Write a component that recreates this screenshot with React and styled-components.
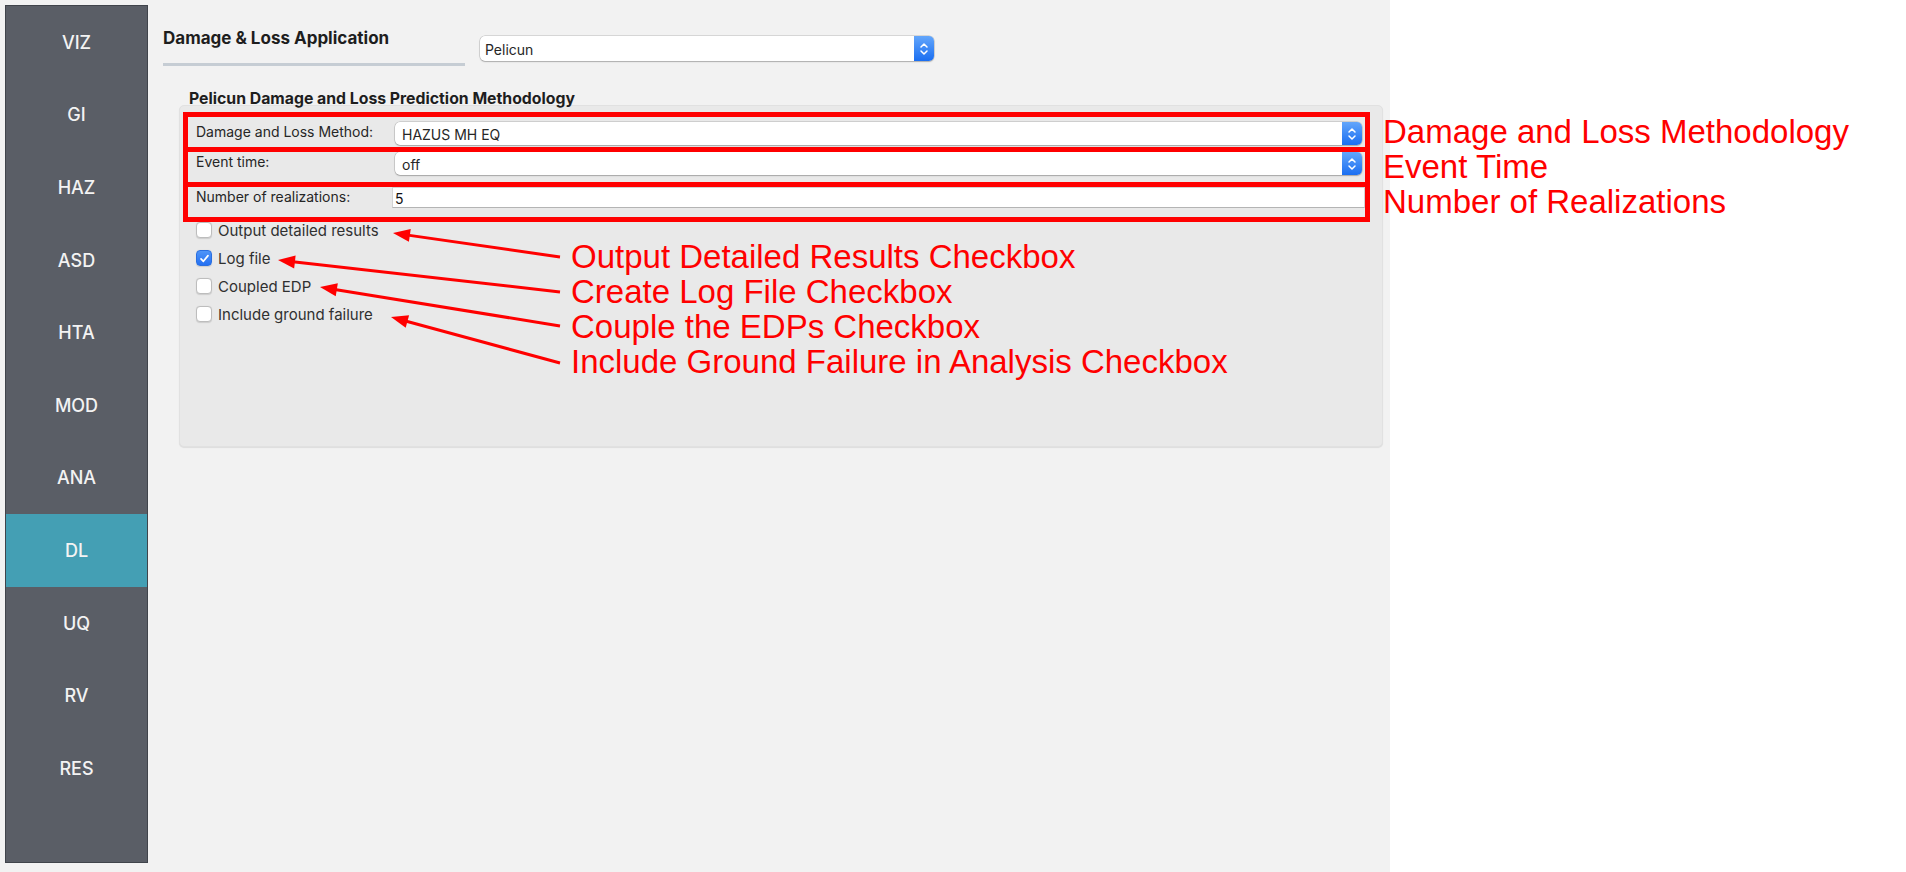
import React from 'react';
import styled, { createGlobalStyle } from 'styled-components';

const Global = createGlobalStyle`
  html, body { margin: 0; padding: 0; background: #ffffff; }
  body {
    width: 1906px; height: 872px; overflow: hidden;
    font-family: Inter, "Liberation Sans", sans-serif;
    -webkit-font-smoothing: antialiased;
  }
`;

const Canvas = styled.div`
  position: relative;
  width: 1906px;
  height: 872px;
  display: flex;
  background: #ffffff;
`;

const Window = styled.div`
  width: 1390px;
  height: 872px;
  box-sizing: border-box;
  background: #f2f2f2;
  padding: 5px 0 0 5px;
  display: flex;
  align-items: flex-start;
`;

const Sidebar = styled.nav`
  width: 143px;
  height: 858px;
  box-sizing: border-box;
  flex: none;
  background: #5a5e66;
  border: 1px solid #40444b;
  display: flex;
  flex-direction: column;
`;

const NavItem = styled.div`
  height: 72.6px;
  flex: none;
  display: flex;
  align-items: center;
  justify-content: center;
  font-size: 18px;
  font-weight: 500;
  color: #f3f3f3;
  background: ${p => (p.$active ? '#449fb4' : 'transparent')};
`;

const Main = styled.main`
  flex: 1;
  display: flex;
  flex-direction: column;
  padding-left: 15px;
`;

const HeaderRow = styled.div`
  display: flex;
  align-items: flex-start;
  margin-top: 23px;
`;

const Tab = styled.div`
  width: 302px;
  display: flex;
  flex-direction: column;
`;

const TabTitle = styled.div`
  font-size: 17px;
  font-weight: 700;
  line-height: 20px;
  color: #1e1e1e;
  white-space: nowrap;
`;

const TabRule = styled.div`
  margin-top: 15px;
  height: 3px;
  background: #c6cdd4;
`;

const Combo = styled.div`
  position: relative;
  box-sizing: border-box;
  width: ${p => p.$width || 'auto'};
  height: ${p => p.$height || 23}px;
  margin-top: ${p => p.$top || 0}px;
  margin-left: ${p => p.$left || 0}px;
  background: #ffffff;
  border-radius: 5px;
  box-shadow: 0 0 0 0.5px rgba(0, 0, 0, 0.22), 0 1px 1.5px rgba(0, 0, 0, 0.2);
  display: flex;
  align-items: center;
  padding: 2px 26px 0 ${p => p.$pad || 7}px;
  font-size: ${p => p.$fs || 14}px;
  color: #262626;
  white-space: nowrap;
`;

const Stepper = styled.div`
  position: absolute;
  right: 0;
  top: 0;
  bottom: 0;
  width: 20px;
  border-radius: 0 5px 5px 0;
  background: linear-gradient(#63a6fb, #1a6ef1);
  display: flex;
  align-items: center;
  justify-content: center;
`;

const GroupTitle = styled.div`
  position: relative;
  z-index: 1;
  margin: 27px 0 0 26px;
  font-size: 15.8px;
  line-height: 12px;
  font-weight: 700;
  color: #1e1e1e;
  white-space: nowrap;
`;

const GroupBox = styled.section`
  margin-left: 16px;
  width: 1204px;
  height: 342px;
  box-sizing: border-box;
  background: #e9e9e9;
  border: 1px solid #e1e1e1;
  border-radius: 5px;
  box-shadow: 0 1px 1px rgba(0, 0, 0, 0.09);
  padding: 16px 20px 0 16px;
  display: flex;
  flex-direction: column;
`;

const FormRow = styled.div`
  display: grid;
  grid-template-columns: 199px 1fr;
  align-items: start;
  margin-top: ${p => p.$gap || 0}px;
`;

const FieldLabel = styled.div`
  font-size: 14px;
  line-height: 20px;
  color: #262626;
  white-space: nowrap;
`;

const LineEdit = styled.div`
  box-sizing: border-box;
  height: 21px;
  margin: 0 -3px;
  background: #ffffff;
  border: 1px solid #d3d3d3;
  border-bottom-color: #b4b4b4;
  display: flex;
  align-items: center;
  padding: 1px 2px 0;
  font-size: 14px;
  color: #111;
`;

const CheckList = styled.div`
  margin-top: 8px;
  display: flex;
  flex-direction: column;
`;

const CheckRow = styled.label`
  height: 28px;
  display: flex;
  align-items: center;
  gap: 6px;
  font-size: 15px;
  color: #303030;
  white-space: nowrap;
`;

const Box = styled.span`
  box-sizing: border-box;
  width: 16px;
  height: 16px;
  border-radius: 4px;
  display: flex;
  align-items: center;
  justify-content: center;
  background: ${p => (p.$checked ? 'linear-gradient(#4f95f8, #2470f2)' : '#ffffff')};
  border: 1px solid ${p => (p.$checked ? '#2a6fe0' : '#bdbdbd')};
  box-shadow: 0 0.5px 1px rgba(0, 0, 0, 0.12);
`;

const Blank = styled.div`
  flex: 1;
  background: #ffffff;
`;

const Overlay = styled.svg`
  position: absolute;
  left: 0;
  top: 0;
  width: 1906px;
  height: 872px;
  pointer-events: none;
`;

const Note = styled.div`
  position: absolute;
  left: ${p => p.$x}px;
  top: ${p => p.$y}px;
  font-family: "Liberation Sans", Arial, sans-serif;
  font-size: 33px;
  line-height: 35px;
  color: #ff0000;
  white-space: nowrap;
  pointer-events: none;
`;

const Chevrons = () => (
  <svg width="10" height="16" viewBox="0 0 10 16" fill="none">
    <path d="M2 6 L5 3 L8 6" stroke="#fff" strokeWidth="1.5" strokeLinecap="round" strokeLinejoin="round" />
    <path d="M2 10 L5 13 L8 10" stroke="#fff" strokeWidth="1.5" strokeLinecap="round" strokeLinejoin="round" />
  </svg>
);

const Check = () => (
  <svg width="11" height="11" viewBox="0 0 11 11" fill="none">
    <path d="M2 5.8 L4.4 8.3 L9 2.6" stroke="#fff" strokeWidth="1.7" strokeLinecap="round" strokeLinejoin="round" />
  </svg>
);

const Arrow = ({ x1, y1, x2, y2 }) => {
  const dx = x2 - x1;
  const dy = y2 - y1;
  const len = Math.hypot(dx, dy);
  const ux = dx / len;
  const uy = dy / len;
  const hl = 17;
  const hw = 6.5;
  const bx = x2 - ux * hl;
  const by = y2 - uy * hl;
  const pts = `${x2},${y2} ${bx - uy * hw},${by + ux * hw} ${bx + uy * hw},${by - ux * hw}`;
  return (
    <g>
      <line x1={x1} y1={y1} x2={bx + ux * 2} y2={by + uy * 2} stroke="#ff0000" strokeWidth="3" />
      <polygon points={pts} fill="#ff0000" />
    </g>
  );
};

const NAV = ['VIZ', 'GI', 'HAZ', 'ASD', 'HTA', 'MOD', 'ANA', 'DL', 'UQ', 'RV', 'RES'];

const CHECKS = [
  { label: 'Output detailed results', checked: false },
  { label: 'Log file', checked: true },
  { label: 'Coupled EDP', checked: false },
  { label: 'Include ground failure', checked: false },
];

const ARROWS = [
  { x1: 560, y1: 257, x2: 393, y2: 233 },
  { x1: 560, y1: 292, x2: 278, y2: 260 },
  { x1: 560, y1: 326, x2: 320, y2: 287 },
  { x1: 560, y1: 363, x2: 391, y2: 317 },
];

export default function App() {
  return (
    <Canvas>
      <Global />
      <Window>
        <Sidebar>
          {NAV.map(n => (
            <NavItem key={n} $active={n === 'DL'}>{n}</NavItem>
          ))}
        </Sidebar>
        <Main>
          <HeaderRow>
            <Tab>
              <TabTitle>Damage &amp; Loss Application</TabTitle>
              <TabRule />
            </Tab>
            <Combo $width="454px" $height={25} $top={8} $left={15} $pad={5}>
              Pelicun
              <Stepper><Chevrons /></Stepper>
            </Combo>
          </HeaderRow>
          <GroupTitle>Pelicun Damage and Loss Prediction Methodology</GroupTitle>
          <GroupBox>
            <FormRow>
              <FieldLabel>Damage and Loss Method:</FieldLabel>
              <Combo>
                HAZUS MH EQ
                <Stepper><Chevrons /></Stepper>
              </Combo>
            </FormRow>
            <FormRow $gap={7}>
              <FieldLabel>Event time:</FieldLabel>
              <Combo>
                off
                <Stepper><Chevrons /></Stepper>
              </Combo>
            </FormRow>
            <FormRow $gap={12}>
              <FieldLabel>Number of realizations:</FieldLabel>
              <LineEdit>5</LineEdit>
            </FormRow>
            <CheckList>
              {CHECKS.map(c => (
                <CheckRow key={c.label}>
                  <Box $checked={c.checked}>{c.checked && <Check />}</Box>
                  {c.label}
                </CheckRow>
              ))}
            </CheckList>
          </GroupBox>
        </Main>
      </Window>
      <Blank />

      <Overlay viewBox="0 0 1906 872">
        <rect x="185.5" y="114.5" width="1182" height="35" fill="none" stroke="#ff0000" strokeWidth="5" />
        <rect x="185.5" y="149.5" width="1182" height="35" fill="none" stroke="#ff0000" strokeWidth="5" />
        <rect x="185.5" y="184.5" width="1182" height="35" fill="none" stroke="#ff0000" strokeWidth="5" />
        {ARROWS.map((a, i) => (
          <Arrow key={i} {...a} />
        ))}
      </Overlay>
      <Note $x={1383} $y={114}>
        <div>Damage and Loss Methodology</div>
        <div>Event Time</div>
        <div>Number of Realizations</div>
      </Note>
      <Note $x={571} $y={239}>
        <div>Output Detailed Results Checkbox</div>
        <div>Create Log File Checkbox</div>
        <div>Couple the EDPs Checkbox</div>
        <div>Include Ground Failure in Analysis Checkbox</div>
      </Note>
    </Canvas>
  );
}
